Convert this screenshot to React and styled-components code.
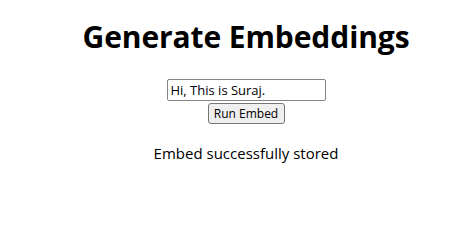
import React, { useState } from 'react';
import styled, { createGlobalStyle } from 'styled-components';

const GlobalStyle = createGlobalStyle`
  html, body { margin: 0; padding: 0; background: #ffffff; }
  body { font-family: "Open Sans", "Noto Sans", sans-serif; color: #000; }
`;

const Page = styled.div`
  display: flex;
  flex-direction: column;
  align-items: center;
  padding-left: 36px;
`;

const Title = styled.h1`
  margin: 16px 0 0;
  font-size: 30px;
  line-height: 42px;
  font-weight: 700;
  letter-spacing: -0.1px;
`;

const Form = styled.div`
  display: flex;
  flex-direction: column;
  align-items: center;
  gap: 2px;
  margin-top: 21px;
`;

const TextInput = styled.input`
  box-sizing: border-box;
  width: 159px;
  height: 22px;
  padding: 1px 3px;
  border: 1px solid #858585;
  border-radius: 2px;
  font-family: "Open Sans", "Noto Sans", sans-serif;
  font-size: 13px;
  color: #000;
  outline: none;
`;

const Button = styled.button`
  box-sizing: border-box;
  width: 77px;
  height: 21px;
  padding: 0;
  border: 1px solid #767676;
  border-radius: 3px;
  background: #efefef;
  font-family: "Open Sans", "Noto Sans", sans-serif;
  font-size: 12px;
  color: #000;
  cursor: pointer;
  &:hover { background: #e5e5e5; }
`;

const Status = styled.p`
  margin: 18px 0 0;
  font-size: 15px;
  line-height: 22px;
`;

export default function App() {
  const [text, setText] = useState('Hi, This is Suraj.');
  const [status, setStatus] = useState('Embed successfully stored');

  return (
    <>
      <GlobalStyle />
      <Page>
        <Title>Generate Embeddings</Title>
        <Form>
          <TextInput value={text} onChange={(e) => setText(e.target.value)} />
          <Button onClick={() => setStatus('Embed successfully stored')}>Run Embed</Button>
        </Form>
        <Status>{status}</Status>
      </Page>
    </>
  );
}
